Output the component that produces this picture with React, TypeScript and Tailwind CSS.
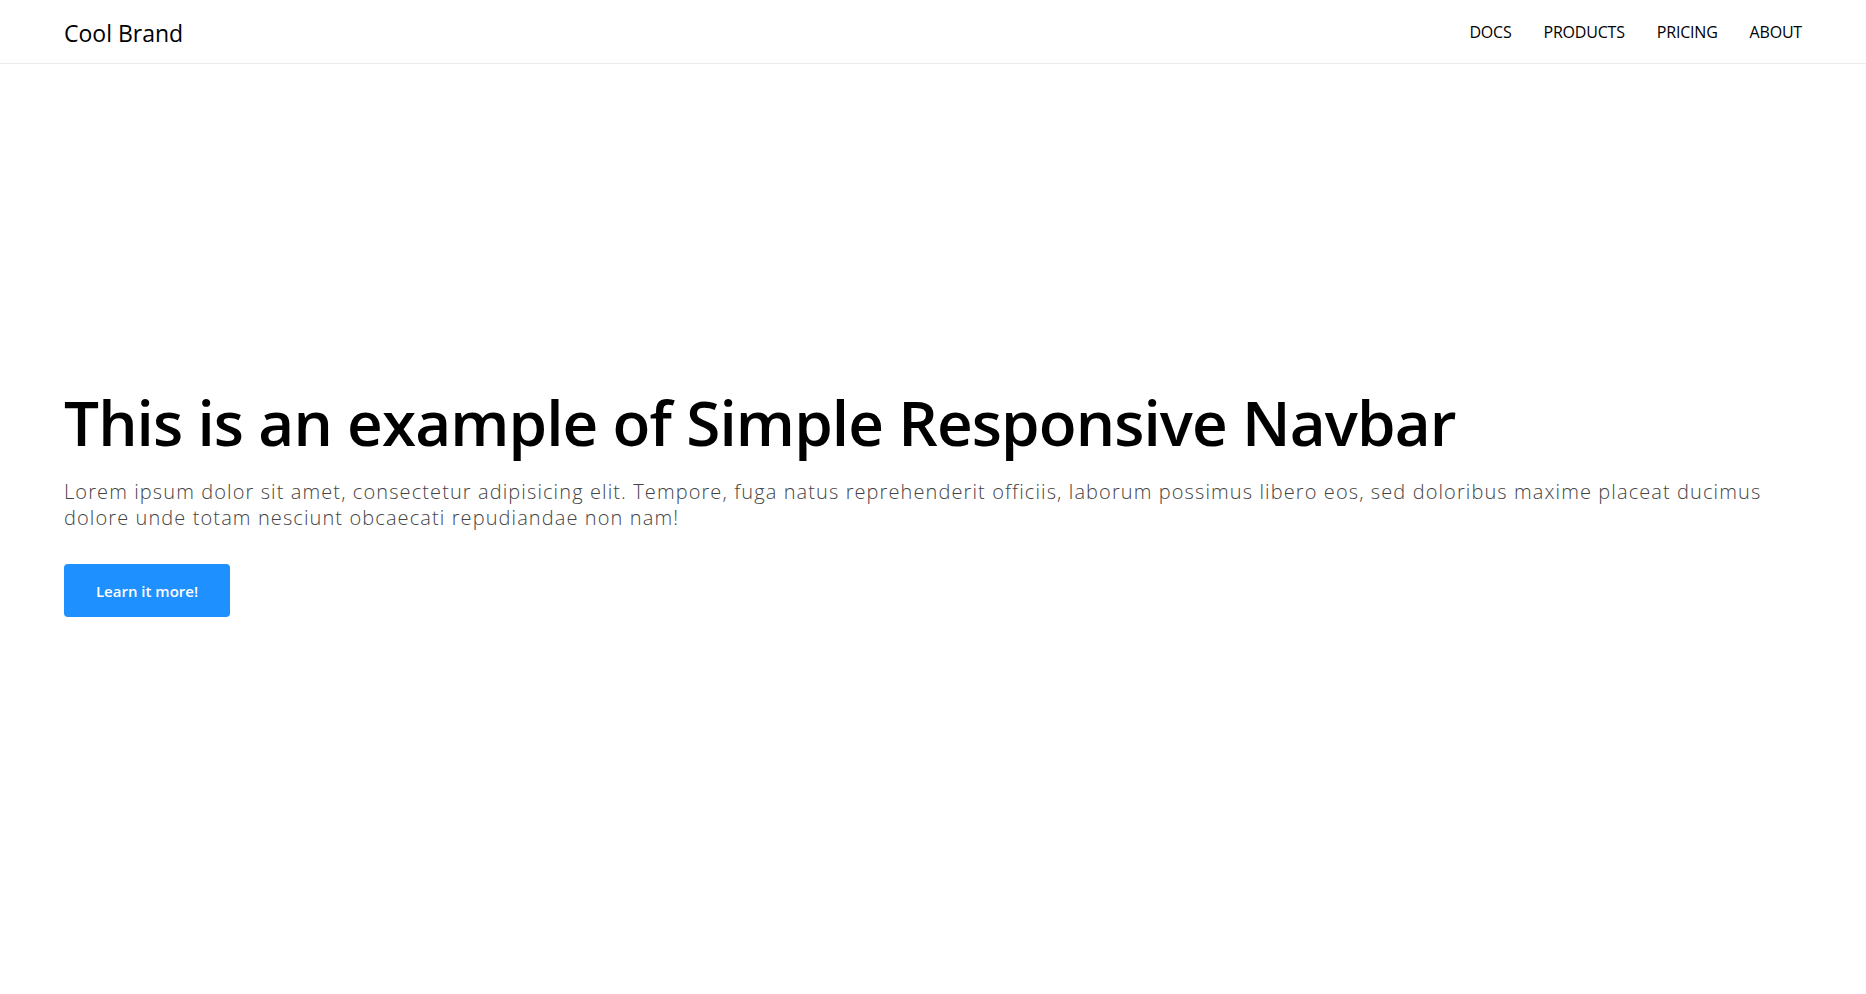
export default function App() {
  const links = ['DOCS', 'PRODUCTS', 'PRICING', 'ABOUT']

  return (
    <div className="min-h-screen bg-white font-['Open_Sans',sans-serif] text-black">
      {/* Navbar */}
      <nav className="flex h-16 items-center justify-between border-b border-[#ebebeb] px-16">
        <a href="#" className="pt-1 text-[23px] font-medium">Cool Brand</a>
        <ul className="flex items-center gap-8">
          {links.map((link) => (
            <li key={link}>
              <a href="#" className="text-[16px] font-medium tracking-[-0.2px]">{link}</a>
            </li>
          ))}
        </ul>
      </nav>

      {/* Hero */}
      <main className="px-16 pt-[321px]">
        <h1 className="text-[62px] font-semibold leading-[1.2] tracking-[-0.9px]">
          This is an example of Simple Responsive Navbar
        </h1>
        <p className="mt-5 text-[20px] font-light leading-[26px] tracking-[1.1px] text-[#444]">
          Lorem ipsum dolor sit amet, consectetur adipisicing elit. Tempore, fuga natus reprehenderit officiis, laborum possimus libero eos, sed doloribus maxime placeat ducimus dolore unde totam nesciunt obcaecati repudiandae non nam!
        </p>
        <button className="mt-[33px] h-[53px] w-[166px] rounded bg-[#1e90ff] text-[15px] font-semibold text-white">
          Learn it more!
        </button>
      </main>
    </div>
  )
}
